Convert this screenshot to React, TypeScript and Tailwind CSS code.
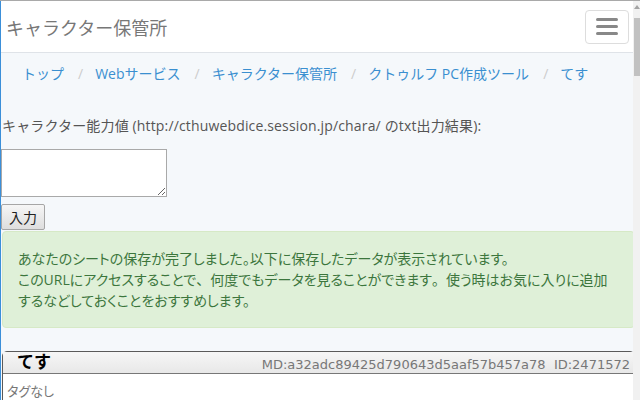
import React from "react";

const jp = { fontFamily: '"Open Sans", "Noto Sans CJK JP", sans-serif' };

export default function App() {
  const crumbs = ["トップ", "Webサービス", "キャラクター保管所", "クトゥルフ PC作成ツール", "てす"];
  return (
    <div className="w-[640px] h-[400px] overflow-hidden flex flex-col bg-[#f5f8fb]" style={jp}>
      <div className="h-px bg-[#a9a9a9] shrink-0" />
      <div className="flex flex-1 min-h-0">
        <div className="flex-1 min-w-0 flex flex-col border-l border-[#3b8fd9] overflow-hidden">
          {/* navbar */}
          <div className="h-[52px] shrink-0 bg-white border-b border-[#dfe3e8] flex items-center justify-between pl-[5px] pr-[4px]">
            <div className="text-[18px] text-[#777777] leading-none" style={{ fontFamily: '"Noto Sans CJK JP", sans-serif' }}>キャラクター保管所</div>
            <button className="w-[44px] h-[34px] border border-[#dddddd] rounded-[4px] bg-white flex flex-col items-center justify-center gap-[4px]">
              <span className="block w-[22px] h-[3px] bg-[#888888] rounded-sm" />
              <span className="block w-[22px] h-[3px] bg-[#888888] rounded-sm" />
              <span className="block w-[22px] h-[3px] bg-[#888888] rounded-sm" />
            </button>
          </div>
          {/* breadcrumb */}
          <div className="h-[40px] shrink-0 flex items-center pl-[21px] text-[14px] text-[#3a8fd0]">
            {crumbs.map((c, i) => (
              <React.Fragment key={c}>
                {i > 0 && <span className="text-[#cccccc] pl-[14px] pr-[12px]">/</span>}
                <span>{c}</span>
              </React.Fragment>
            ))}
          </div>
          {/* form */}
          <div className="shrink-0 pt-[24px] text-[14px] text-[#555555] leading-[18px] pl-[1px]" style={{ letterSpacing: '0.15px' }}>
            キャラクター能力値 (http://cthuwebdice.session.jp/chara/ のtxt出力結果):
          </div>
          <div className="shrink-0 mt-[14px] flex">
            <textarea className="w-[166px] h-[48px] bg-white border border-[#a9a9a9] block resize-y" />
          </div>
          <div className="shrink-0 mt-[7px] flex">
            <button className="w-[44px] h-[26px] text-[14px] text-[#222] border border-[#a6a6a6] rounded-[2px] bg-gradient-to-b from-[#f6f6f6] to-[#dedede] flex items-center justify-center">入力</button>
          </div>
          {/* alert */}
          <div className="shrink-0 mt-[1px] ml-[1px] mr-[-2px] h-[97px] bg-[#dff0d8] border border-[#d6e9c6] rounded-[4px] pl-[15px] pt-[16px] text-[14px] leading-[21px] text-[#3c763d]" style={{ fontFeatureSettings: '"palt"' }}>
            <div>あなたのシートの保存が完了しました。以下に保存したデータが表示されています。</div>
            <div>このURLにアクセスすることで<span style={{ fontFeatureSettings: 'normal' }}>、</span>何度でもデータを見ることができます<span style={{ fontFeatureSettings: 'normal' }}>。</span>使う時はお気に入りに追加</div>
            <div>するなどしておくことをおすすめします。</div>
          </div>
          {/* card */}
          <div className="shrink-0 mt-[23px] ml-[1px] mr-[-2px] border border-[#5a5a5a] rounded-t-[5px] bg-white">
            <div className="h-[22px] bg-gradient-to-b from-[#f6f6f6] to-[#e8e8e8] border-b border-[#777] flex items-end justify-between pl-[14px] pr-[4px]">
              <span className="text-[17px] font-bold text-black leading-[20px] pb-[1px]">てす</span>
              <span className="text-[13px] text-[#777777] leading-[16px] whitespace-pre" style={{ fontFamily: '"DejaVu Sans", sans-serif' }}>MD:a32adc89425d790643d5aaf57b457a78  ID:2471572</span>
            </div>
            <div className="h-[30px] pl-[4px] pt-[8px] text-[13px] text-[#777777]" style={{ fontFeatureSettings: '"palt"' }}>タグなし</div>
          </div>
        </div>
        {/* scrollbar */}
        <div className="w-[7px] shrink-0 bg-[#f1f1f1] flex flex-col items-center">
          <div className="mt-[4px] w-0 h-0 border-l-[3px] border-r-[3px] border-b-[4px] border-l-transparent border-r-transparent border-b-[#a3a3a3]" />
          <div className="mt-[9px] w-[6px] h-[58px] bg-[#c1c1c1]" />
        </div>
      </div>
    </div>
  );
}
